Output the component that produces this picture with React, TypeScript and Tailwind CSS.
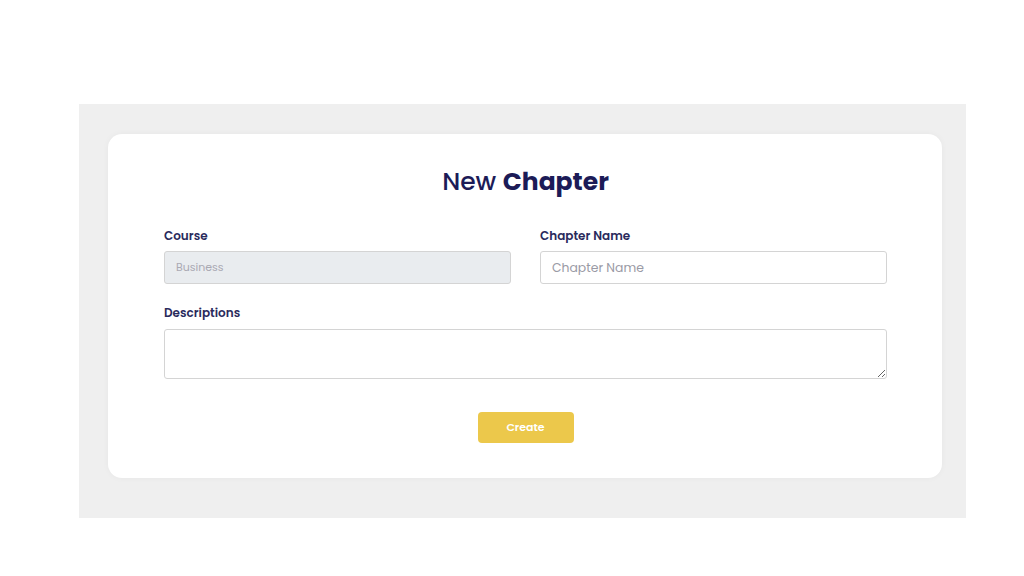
import React from "react";

export default function App() {
  const font = { fontFamily: "Poppins, 'Open Sans', 'Noto Sans', sans-serif" };
  return (
    <div className="w-[1024px] h-[576px] bg-white pt-[104px] pl-[79px]" style={font}>
      <div className="w-[887px] h-[414px] bg-[#efefef] pl-[29px] pr-[24px] pt-[30px]">
        <div className="bg-white rounded-[14px] shadow-[0_0_6px_rgba(0,0,0,0.04)] pt-[31px] pb-[35px] pl-[56px] pr-[55px] h-[344px]">
          <h1 className="text-center text-[25px] leading-[33px] font-medium text-[#1c1b57]">
            New <span className="font-bold">Chapter</span>
          </h1>
          <div className="grid grid-cols-2 gap-x-[29px] mt-[30px]">
            <div>
              <label className="block text-[12px] leading-[16px] font-semibold text-[#2a2a5c] mb-[7px]">Course</label>
              <input
                disabled
                placeholder="Business"
                className="w-full h-[33px] bg-[#e9ecef] border border-[#d4d4d4] rounded-[3px] px-[11px] text-[11px] placeholder:text-[#a9a9b3] outline-none"
              />
            </div>
            <div>
              <label className="block text-[12px] leading-[16px] font-semibold text-[#2a2a5c] mb-[7px]">Chapter Name</label>
              <input
                placeholder="Chapter Name"
                className="w-full h-[33px] bg-white border border-[#d4d4d4] rounded-[3px] px-[11px] text-[12.4px] placeholder:text-[#9a9aa5] outline-none"
              />
            </div>
          </div>
          <div className="mt-[21px]">
            <label className="block text-[12px] leading-[16px] font-semibold text-[#2a2a5c] mb-[8px]">Descriptions</label>
            <textarea className="block w-full h-[50px] bg-white border border-[#d4d4d4] rounded-[3px] px-[11px] py-[6px] text-[12px] outline-none" />
          </div>
          <div className="flex justify-center mt-[33px]">
            <button className="w-[96px] h-[31px] bg-[#ecc84b] rounded-[4px] text-white text-[11px] font-semibold">
              Create
            </button>
          </div>
        </div>
      </div>
    </div>
  );
}
